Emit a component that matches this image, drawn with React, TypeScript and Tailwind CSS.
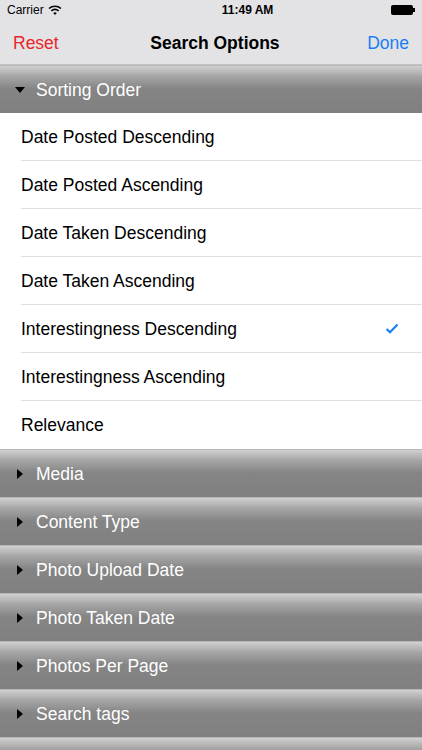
import React from 'react';

const sortOptions = [
  'Date Posted Descending',
  'Date Posted Ascending',
  'Date Taken Descending',
  'Date Taken Ascending',
  'Interestingness Descending',
  'Interestingness Ascending',
  'Relevance',
];

const sections = [
  'Media',
  'Content Type',
  'Photo Upload Date',
  'Photo Taken Date',
  'Photos Per Page',
  'Search tags',
  '',
];

const SectionHeader: React.FC<{ title: string; open?: boolean }> = ({ title, open }) => (
  <div className="h-12 flex items-center bg-[linear-gradient(to_bottom,#d0d0d0_0%,#a6a6a6_22%,#858585_48%,#808080_100%)] border-t border-[#b8b8b8]">
    {title && (
      <>
        <div className="w-9 flex justify-center pl-1">
          {open ? (
            <svg width="10" height="6" viewBox="0 0 10 6">
              <path d="M0 0 L10 0 L5 6 Z" fill="#000" />
            </svg>
          ) : (
            <svg width="6" height="10" viewBox="0 0 6 10">
              <path d="M0 0 L6 5 L0 10 Z" fill="#000" />
            </svg>
          )}
        </div>
        <span className="text-white text-[17.5px] pt-px">{title}</span>
      </>
    )}
  </div>
);

const App: React.FC = () => {
  const selected = 'Interestingness Descending';
  return (
    <div className="w-[422px] h-[750px] overflow-hidden bg-white" style={{ fontFamily: '"Liberation Sans", Arial, sans-serif' }}>
      <div className="bg-[#e3e3e6] border-b border-[#c2c2c4]">
        <div className="h-5 flex items-center justify-between px-[7px] text-[12px] text-black">
          <div className="flex items-center gap-1">
            <span>Carrier</span>
            <svg width="14" height="10" viewBox="0 0 14 10">
              <path d="M1 3.5 A9 9 0 0 1 13 3.5" stroke="#000" strokeWidth="1.6" fill="none" />
              <path d="M3.3 5.8 A6 6 0 0 1 10.7 5.8" stroke="#000" strokeWidth="1.6" fill="none" />
              <path d="M5.2 8 A3 3 0 0 1 8.8 8 L7 10 Z" fill="#000" />
            </svg>
          </div>
          <span className="font-bold ml-[42px]">11:49 AM</span>
          <div className="flex items-center">
            <div className="w-[22px] h-[10px] bg-black rounded-[2px]" />
            <div className="w-[1.5px] h-[4px] bg-black" />
          </div>
        </div>
        <div className="h-11 flex items-center justify-between px-[13px] text-[17.5px] pt-[3px]">
          <span className="text-[#e8262b]">Reset</span>
          <span className="font-bold text-black ml-[4px]">Search Options</span>
          <span className="text-[#1a7ef5]">Done</span>
        </div>
      </div>
      <SectionHeader title="Sorting Order" open />
      <div>
        {sortOptions.map((opt, i) => (
          <div key={opt} className="h-12 flex items-center pl-[21px]">
            <div className={`h-full flex-1 flex items-center justify-between pr-[23px] ${i < sortOptions.length - 1 ? 'border-b border-[#e0e0e0]' : ''}`}>
              <span className="text-[17.5px] text-black pt-px">{opt}</span>
              {opt === selected && (
                <svg width="14" height="11" viewBox="0 0 14 11">
                  <path d="M1.5 6 L5 9.2 L12.5 1.5" stroke="#1a7ef5" strokeWidth="2.2" fill="none" />
                </svg>
              )}
            </div>
          </div>
        ))}
      </div>
      {sections.map((s, i) => (
        <SectionHeader key={i} title={s} />
      ))}
    </div>
  );
};

export default App;
